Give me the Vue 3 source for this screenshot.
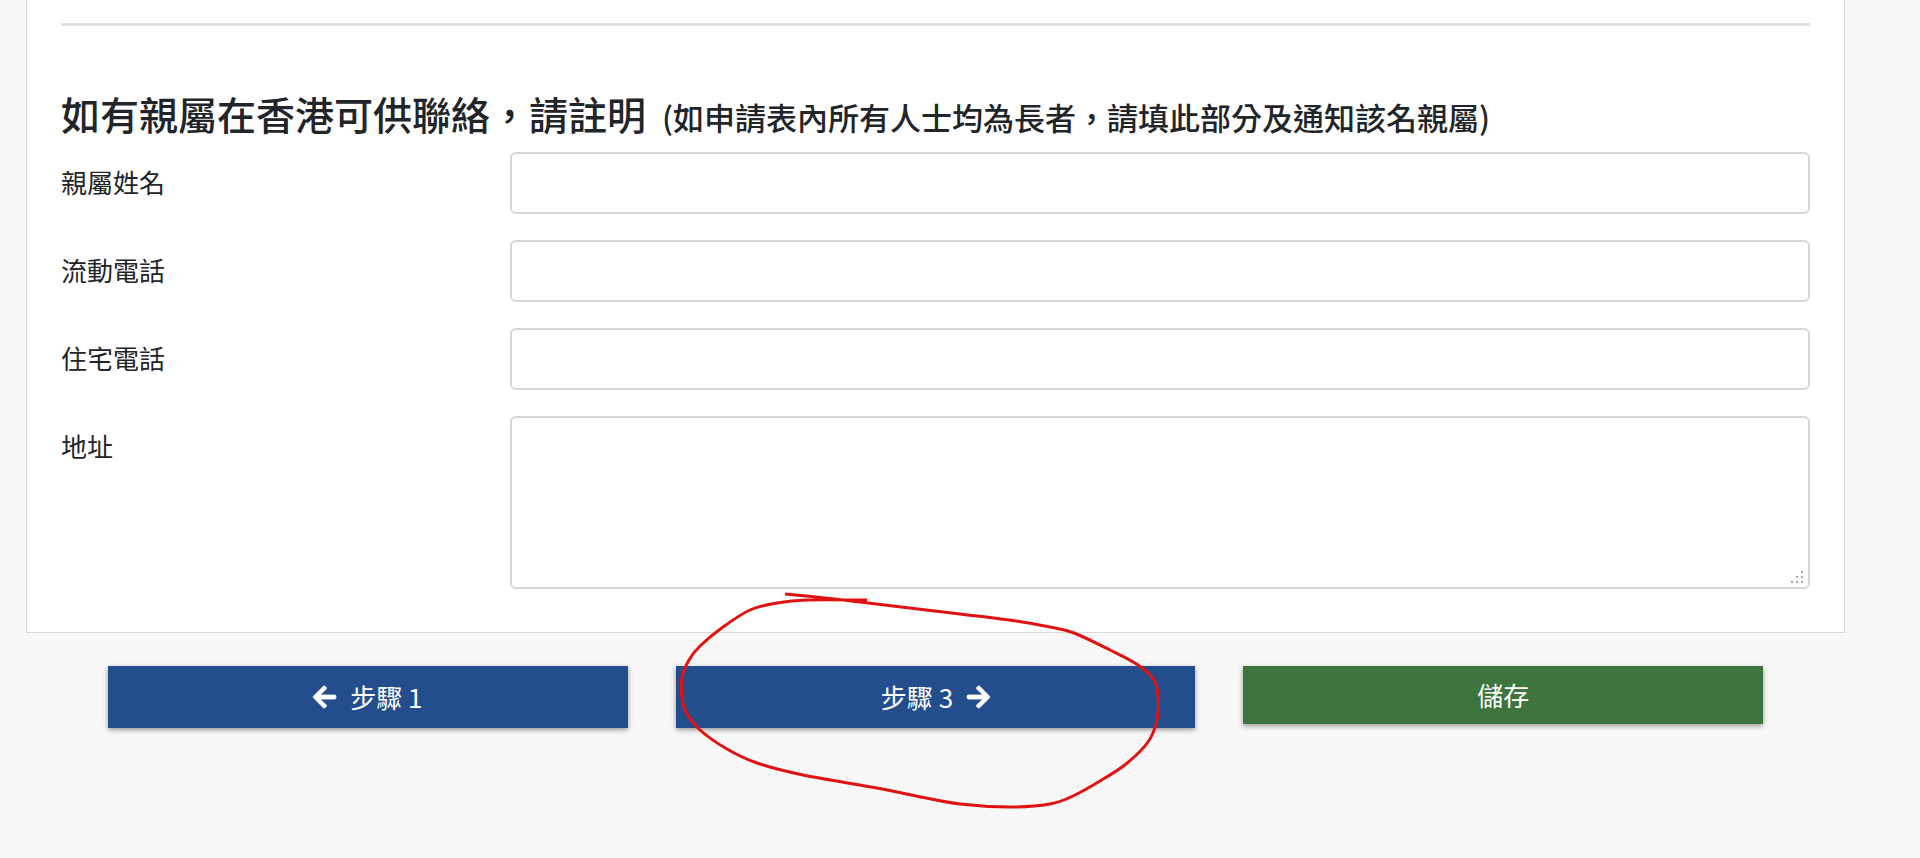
<script setup>
import { reactive } from 'vue'

const fields = [
  { id: 'relative-name', label: '親屬姓名', type: 'text' },
  { id: 'mobile-phone', label: '流動電話', type: 'tel' },
  { id: 'home-phone', label: '住宅電話', type: 'tel' }
]

const form = reactive({
  'relative-name': '',
  'mobile-phone': '',
  'home-phone': '',
  address: ''
})

// Points of the freehand loop, in drawing order.
const loop = [
  [109, 4], [149, 8], [192, 13], [284, 24], [340, 31], [374, 37], [398, 43],
  [434, 60], [462, 75], [478, 90], [482, 106], [481, 130], [472, 152],
  [450, 174], [424, 191], [397, 206], [374, 214], [334, 217], [284, 214],
  [240, 206], [201, 198], [127, 185], [81, 173], [51, 159], [24, 140],
  [10, 122], [6, 108], [6, 87], [13, 70], [24, 56], [47, 37], [74, 20],
  [101, 13], [131, 10], [191, 10]
]

// Catmull-Rom spline through the points, written as cubic curves.
function smooth(points) {
  let d = `M${points[0].join(' ')}`
  for (let i = 0; i < points.length - 1; i++) {
    const a = points[i - 1] || points[i]
    const b = points[i]
    const c = points[i + 1]
    const e = points[i + 2] || c
    const c1 = [b[0] + (c[0] - a[0]) / 6, b[1] + (c[1] - a[1]) / 6]
    const c2 = [c[0] - (e[0] - b[0]) / 6, c[1] - (e[1] - b[1]) / 6]
    d += `C${c1.join(' ')} ${c2.join(' ')} ${c.join(' ')}`
  }
  return d
}

const loopPath = smooth(loop)
</script>

<template>
  <main class="page">
    <form @submit.prevent>
      <section class="card">
        <hr class="divider" />
        <h2 class="title">
          <span>如有親屬在香港可供聯絡，請註明</span>
          <small class="note">(如申請表內所有人士均為長者，請填此部分及通知該名親屬)</small>
        </h2>

        <div class="rows">
          <div v-for="field in fields" :key="field.id" class="row">
            <label class="label" :for="field.id">{{ field.label }}</label>
            <input :id="field.id" v-model="form[field.id]" class="control" :type="field.type" />
          </div>
          <div class="row">
            <label class="label" for="address">地址</label>
            <div class="area">
              <textarea id="address" v-model="form.address" class="control control-area"></textarea>
              <svg class="grip" viewBox="0 0 14 14" aria-hidden="true">
                <path d="M11 1h2v2h-2zM6 6h2v2H6zM11 6h2v2h-2zM1 11h2v2H1zM6 11h2v2H6zM11 11h2v2h-2z" />
              </svg>
            </div>
          </div>
        </div>
      </section>

      <div class="actions">
        <button type="button" class="btn btn-step">
          <svg class="arrow" viewBox="0 0 448 512" aria-hidden="true">
            <path d="M257.5 445.1l-22.2 22.2c-9.4 9.4-24.6 9.4-33.9 0L7 273c-9.4-9.4-9.4-24.6 0-33.9L201.4 44.7c9.4-9.4 24.6-9.4 33.9 0l22.2 22.2c9.5 9.5 9.3 25-.4 34.3L136.6 216H424c13.3 0 24 10.7 24 24v32c0 13.3-10.7 24-24 24H136.6l120.5 114.8c9.8 9.3 10 24.8.4 34.3z" />
          </svg>
          <span>步驟 1</span>
        </button>
        <button type="button" class="btn btn-step">
          <span>步驟 3</span>
          <svg class="arrow" viewBox="0 0 448 512" aria-hidden="true">
            <path d="M190.5 66.9l22.2-22.2c9.4-9.4 24.6-9.4 33.9 0L441 239c9.4 9.4 9.4 24.6 0 33.9L246.6 467.3c-9.4 9.4-24.6 9.4-33.9 0l-22.2-22.2c-9.5-9.5-9.3-25 .4-34.3L311.4 296H24c-13.3 0-24-10.7-24-24v-32c0-13.3 10.7-24 24-24h287.4L190.9 101.2c-9.8-9.3-10-24.8-.4-34.3z" />
          </svg>
        </button>
        <button type="submit" class="btn btn-save">儲存</button>
      </div>
    </form>

    <svg class="mark" viewBox="0 0 484 220" aria-hidden="true">
      <path :d="loopPath" />
    </svg>
  </main>
</template>

<style>
body {
  margin: 0;
  background: #f8f8f8;
}
</style>

<style scoped>
.page {
  position: relative;
  box-sizing: border-box;
  min-height: 100vh;
  padding: 0 75px 96px 26px;
  color: #212529;
  font-family: "Noto Sans CJK TC", sans-serif;
  font-size: 26px;
  line-height: 38px;
}

.card {
  padding: 23px 34px 43px;
  border: 1px solid #d9d9d9;
  border-top: 0;
  background: #fff;
}

.divider {
  height: 3px;
  margin: 0 0 59px;
  border: 0;
  background: #e2e2e2;
}

.title {
  display: flex;
  flex-wrap: wrap;
  align-items: baseline;
  column-gap: 16px;
  margin: 0 0 7px;
  font-size: 39px;
  font-weight: 500;
  line-height: 56px;
}

.note {
  font-size: 31px;
  font-weight: 500;
}

.rows {
  display: grid;
  gap: 26px;
}

.row {
  display: grid;
  grid-template-columns: 1fr 3fr;
  column-gap: 16px;
  align-items: start;
}

.label {
  padding-top: 11px;
}

.control {
  display: block;
  box-sizing: border-box;
  width: 100%;
  height: 62px;
  margin: 0;
  padding: 10px 16px;
  border: 2px solid #d6d6d6;
  border-radius: 6px;
  outline: 0;
  background: #fff;
  color: inherit;
  font: inherit;
}

.control:focus {
  border-color: #234d8c;
}

.area {
  position: relative;
}

.control-area {
  height: 173px;
  resize: none;
}

.grip {
  position: absolute;
  right: 6px;
  bottom: 5px;
  width: 14px;
  height: 14px;
  fill: #a8a8a8;
  pointer-events: none;
}

.actions {
  display: grid;
  grid-template-columns: repeat(3, 1fr);
  gap: 48px;
  align-items: start;
  padding: 33px 82px 0;
}

.btn {
  display: flex;
  align-items: center;
  justify-content: center;
  gap: 14px;
  padding: 10px 16px;
  border: 0;
  color: #fff;
  font: inherit;
  box-shadow: 0 2px 5px rgba(0, 0, 0, 0.4);
  cursor: pointer;
}

.btn-step {
  padding: 12px 16px;
  background: #234d8c;
}

.btn-save {
  background: #3e743d;
}

.arrow {
  width: 23px;
  height: 26px;
  overflow: visible;
  fill: currentColor;
  stroke: currentColor;
  stroke-width: 16;
}

.mark {
  position: absolute;
  top: 590px;
  left: 676px;
  width: 484px;
  height: 220px;
  fill: none;
  stroke: #e01212;
  stroke-width: 3;
  pointer-events: none;
}
</style>
